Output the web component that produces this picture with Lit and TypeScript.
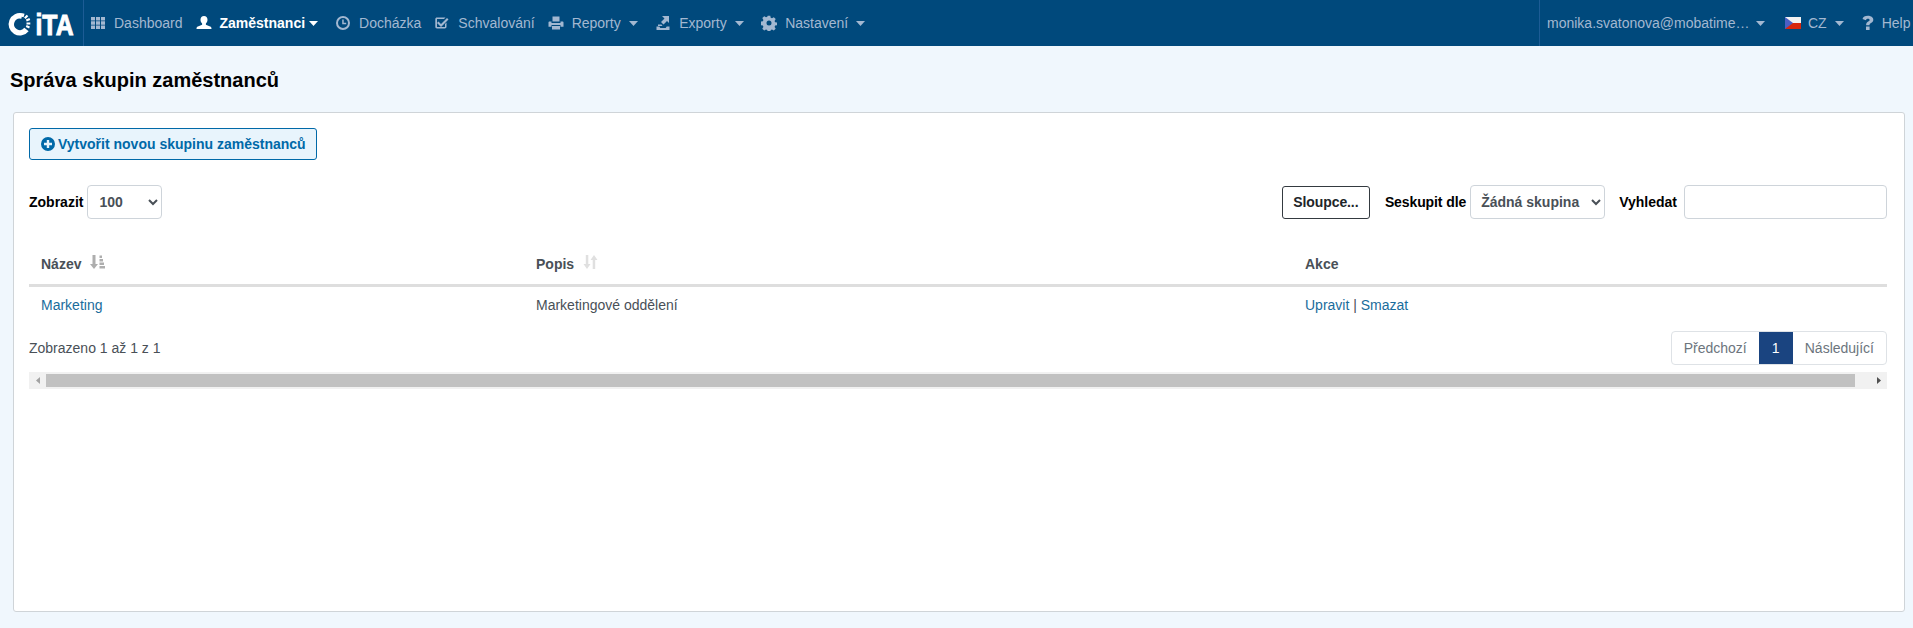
import { LitElement, html, css, svg } from "lit";
import { customElement } from "lit/decorators.js";

const caret = html`<svg class="caret" width="9" height="5" viewBox="0 0 9 5"><path d="M0 0h9L4.5 5z" fill="currentColor"/></svg>`;
const ic = (p: any) => html`<svg class="ic" width="16" height="16" viewBox="0 0 16 16" fill="currentColor">${p}</svg>`;

const gridIcon = svg`<path d="M1 2h4v3.5H1zM6 2h4v3.5H6zM11 2h4v3.5h-4zM1 6.300h4v3.500H1zM6 6.300h4v3.500H6zM11 6.300h4v3.500h-4zM1 10.600h4v3.500H1zM6 10.600h4v3.500H6zM11 10.600h4v3.500h-4z"/>`;
const userIcon = svg`<path d="M8 1c2.200 0 3.500 1.600 3.500 3.800 0 1.600-.8 3-1.600 3.700v1.300l4.200 1.700c1 .4 1.400 1.100 1.400 2.500H.5c0-1.400.4-2.100 1.400-2.500l4.200-1.700V8.500C5.300 7.800 4.500 6.400 4.500 4.800 4.500 2.600 5.800 1 8 1z"/>`;
const clockIcon = svg`<path fill-rule="evenodd" d="M8 1a7 7 0 1 1 0 14A7 7 0 0 1 8 1zm0 2a5 5 0 1 0 0 10A5 5 0 0 0 8 3z"/><path d="M7.200 4.500h1.500v3.300h2.500v1.400h-4z"/>`;
const checkIcon = svg`<path d="M3 2.500h8.500L10 4H3.300c-.2 0-.3.100-.3.300v7.400c0 .2.100.3.300.3h7.400c.2 0 .3-.1.300-.3V9l1.500-1.500v4.300c0 1-.8 1.700-1.700 1.700H3c-1 0-1.700-.7-1.700-1.700V4.200c0-1 .7-1.700 1.700-1.700z"/><path d="M4.500 6.500 7 9l6-6 1.500 1.500L7 12 3 8z"/>`;
const printIcon = svg`<path d="M4.500 1.500h7v5h-7zM.5 7.500C.5 6.700 1 6.500 1.700 6.500h1.800V8h9V6.500h1.800c.7 0 1.200.2 1.200 1v4.300h-3V10h-9v1.800h-3zM4 11h8v3.500H4z"/>`;
const exportIcon = svg`<path d="M1.500 11.500h2.800l1 1.500h5.400l1-1.500h2.800V15h-13z"/><path d="M7 1h7v7l-2-2-3.500 3.500L6 7l3.500-3.500z"/><path d="M3 9.500h3.500l1 1.500H3z"/>`;
const gearIcon = svg`<path fill-rule="evenodd" d="M6.700.7h2.600l.4 2 1.300.6 1.800-1.100 1.900 1.900-1.100 1.800.5 1.300 2 .4v2.600l-2 .4-.5 1.300 1.100 1.800-1.900 1.900-1.800-1.100-1.300.5-.4 2H6.700l-.4-2-1.300-.5-1.800 1.100-1.900-1.900 1.100-1.800-.5-1.300-2-.4V6.600l2-.4.5-1.300-1.100-1.800 1.900-1.900L5 2.300l1.300-.6zM8 5.500a2.500 2.500 0 1 0 0 5 2.500 2.500 0 0 0 0-5z"/>`;

@customElement("app-root")
export class AppRoot extends LitElement {
  static styles = css`
    :host { display: block; height: 628px; background: #f0f7fd; font: 14px "Liberation Sans", Arial, sans-serif; color: #495057; overflow: hidden; }
    * { box-sizing: border-box; }
    .nav { height: 46px; background: #00497c; color: #a3b8d1; display: flex; align-items: center; white-space: nowrap; }
    .brand { width: 84px; height: 46px; flex: none; border-right: 1px solid #1d5c95; padding-left: 8px; display: flex; align-items: center; }
    .brand svg { overflow: visible; }
    .menu { display: flex; align-items: center; flex: 1; padding-left: 6px; height: 46px; }
    .item { display: flex; align-items: center; margin-right: 13px; }
    .item .ic { margin-right: 8px; }
    .item .caret { margin-left: 8px; }
    .item.dd { margin-right: 17.5px; }
    .item.active { color: #fff; font-weight: bold; margin-right: 17px; }
    .item.active .caret { margin-left: 4px; }
    .account { width: 374px; height: 46px; flex: none; border-left: 1px solid #1d5c95; padding-left: 7px; display: flex; align-items: center; }
    .account .email { width: 201px; white-space: nowrap; }
    .account .caret { margin-left: 8px; }
    .flag { margin: 0 7px 0 20px; display: block; }
    .help { display: flex; align-items: center; margin-left: 18px; }
    .help svg { margin-right: 8px; }
    h1 { margin: 0; padding: 22px 0 0 10px; font-size: 20px; line-height: 24px; font-weight: bold; color: #000; height: 66px; }
    .card { margin: 0 8px 0 13px; height: 500px; background: #fff; border: 1px solid #cfd4d8; border-radius: 3px; padding: 15px 17px 0 15px; }
    .create { height: 32px; width: 288px; display: flex; align-items: center; padding-left: 11px; gap: 3px; border: 1px solid #0069a8; border-radius: 3px; background: #e8f4fc; color: #0069a8; font-weight: bold; font-size: 14px; }
    .controls { display: flex; align-items: center; height: 34px; margin-top: 25px; color: #000; font-weight: bold; }
    .spacer { flex: 1; }
    select { height: 34px; border: 1px solid #ced4da; border-radius: 4px; background: #fff; color: #495057; font: bold 14px "Liberation Sans", Arial, sans-serif; }
    .s1 { width: 75px; margin-left: 4px; padding: 0 7px; }
    .s2 { width: 135px; margin: 0 14px 0 4px; padding: 0 6px; }
    .group { letter-spacing: -0.1px; }
    .columns { width: 88px; height: 33px; display: flex; align-items: center; justify-content: center; border: 1px solid #343a40; border-radius: 3px; background: #fff; margin-right: 15px; color: #212529; letter-spacing: -0.1px; }
    .search { width: 203px; height: 34px; margin-left: 7px; border: 1px solid #ced4da; border-radius: 4px; background: #fff; }
    table { width: 100%; border-collapse: collapse; table-layout: fixed; margin-top: 25px; }
    th { height: 41px; padding: 0 12px; text-align: left; font-weight: bold; color: #495057; border-bottom: 3px solid #dedede; }
    th .h { display: flex; align-items: center; gap: 9px; }
    th svg { margin-top: -4px; }
    td { height: 38px; padding: 0 12px; color: #495057; }
    .c1 { width: 495px; } .c2 { width: 769px; }
    .link { color: #1a6c9c; }
    .foot { display: flex; align-items: center; justify-content: space-between; height: 34px; margin-top: 8px; }
    .pages { display: flex; height: 34px; border: 1px solid #dee2e6; border-radius: 4px; overflow: hidden; color: #6c757d; }
    .pages span { display: flex; align-items: center; padding: 0 12px; }
    .pages .on { background: #1a4480; color: #fff; width: 34px; justify-content: center; padding: 0; }
    .bar { display: flex; align-items: center; height: 17px; margin-top: 7px; background: #f1f1f1; }
    .arrow { width: 17px; height: 17px; display: flex; align-items: center; justify-content: center; flex: none; color: #a3a3a3; }
    .arrow.r { color: #505050; margin-left: 15px; }
    .thumb { flex: 1; height: 13px; background: #c1c1c1; }
  `;

  render() {
    return html`
      <div class="nav">
        <div class="brand">
          <svg width="66" height="30" viewBox="0 0 66 30" role="img" aria-label="iTA">
            <path d="M14 8a8.500 8.500 0 1 0 4.500 13.500" fill="none" stroke="#fff" stroke-width="5.500"/>
            <path d="M15.500 5.500l-1 3.500 M19.500 7.500l-2.700 2.800 M21.800 11l-3.500 1.500 M22.300 15.500h-3.800 M21.500 19.500l-3.300-1.400" stroke="#fff" stroke-width="2.200" fill="none"/>
            <text x="27.500" y="27" fill="#fff" stroke="#fff" stroke-width="1" textLength="38" lengthAdjust="spacingAndGlyphs" font-family="Liberation Sans" font-weight="bold" font-size="30">iTA</text>
          </svg>
        </div>
        <div class="menu">
          <div class="item">${ic(gridIcon)}Dashboard</div>
          <div class="item active">${ic(userIcon)}Zaměstnanci${caret}</div>
          <div class="item">${ic(clockIcon)}Docházka</div>
          <div class="item">${ic(checkIcon)}Schvalování</div>
          <div class="item dd">${ic(printIcon)}Reporty${caret}</div>
          <div class="item dd">${ic(exportIcon)}Exporty${caret}</div>
          <div class="item dd">${ic(gearIcon)}Nastavení${caret}</div>
        </div>
        <div class="account">
          <span class="email">monika.svatonova@mobatime…</span>${caret}
          <svg class="flag" width="16" height="12" viewBox="0 0 16 12">
            <rect width="16" height="6" fill="#f2f2f2"/><rect y="6" width="16" height="6" fill="#d7260d"/><path d="M0 0l8 6-8 6z" fill="#4a5fc4"/>
          </svg>
          <span>CZ</span>${caret}
          <div class="help">
            <svg width="12" height="16" viewBox="0 0 12 16" fill="currentColor"><path d="M.5 4C1.100 2 3 .8 5.800 .8c3.200 0 5.500 1.600 5.500 3.900 0 1.700-1 2.600-2.300 3.400-1.100.7-1.500 1.100-1.500 2.100H4.100c0-1.800.6-2.700 2-3.600.9-.6 1.500-1 1.500-1.700 0-.7-.7-1.100-1.600-1.100-1.100 0-1.800.5-2.200 1.500zM4 11.500h3.600V15H4z"/></svg>
            Help
          </div>
        </div>
      </div>
      <h1>Správa skupin zaměstnanců</h1>
      <div class="card">
        <div class="create">
          <svg width="14" height="14" viewBox="0 0 14 14"><path fill="currentColor" fill-rule="evenodd" d="M7 0a7 7 0 1 1 0 14A7 7 0 0 1 7 0zM5.800 3v2.800H3v2.400h2.800V11h2.400V8.200H11V5.800H8.200V3z"/></svg>
          Vytvořit novou skupinu zaměstnanců
        </div>
        <div class="controls">
          <span>Zobrazit</span>
          <select class="s1"><option>100</option></select>
          <span class="spacer"></span>
          <div class="columns">Sloupce...</div>
          <span class="group">Seskupit dle</span>
          <select class="s2"><option>Žádná skupina</option></select>
          <span>Vyhledat</span>
          <div class="search"></div>
        </div>
        <table>
          <colgroup><col class="c1" /><col class="c2" /><col /></colgroup>
          <thead>
            <tr>
              <th><div class="h">Název
                <svg width="15" height="14" viewBox="0 0 15 14" fill="#aeaeae"><path d="M2.500 0h3v9h2.500L4 14 0 9h2.500z"/><path d="M9.500 .5h2.500v2.500H9.500zM9.500 4h3.500v2.500H9.500zM9.500 7.500h4.500v2.500H9.500zM9.500 11h5.500v2.500H9.500z"/></svg>
              </div></th>
              <th><div class="h">Popis
                <svg width="15" height="14" viewBox="0 0 15 14" fill="#e0e0e0"><path d="M2.800 0h2.500v9h2.200L4 14 .5 9h2.300z"/><path d="M9.700 14h2.500V5h2.300L11 0 7.500 5h2.200z"/></svg>
              </div></th>
              <th>Akce</th>
            </tr>
          </thead>
          <tbody>
            <tr>
              <td class="link">Marketing</td>
              <td>Marketingové oddělení</td>
              <td><span class="link">Upravit</span> | <span class="link">Smazat</span></td>
            </tr>
          </tbody>
        </table>
        <div class="foot">
          <span>Zobrazeno 1 až 1 z 1</span>
          <div class="pages"><span>Předchozí</span><span class="on">1</span><span>Následující</span></div>
        </div>
        <div class="bar">
          <div class="arrow"><svg width="4" height="7" viewBox="0 0 4 7"><path d="M4 0v7L0 3.500z" fill="currentColor"/></svg></div>
          <div class="thumb"></div>
          <div class="arrow r"><svg width="4" height="7" viewBox="0 0 4 7"><path d="M0 0v7l4-3.500z" fill="currentColor"/></svg></div>
        </div>
      </div>
    `;
  }
}
